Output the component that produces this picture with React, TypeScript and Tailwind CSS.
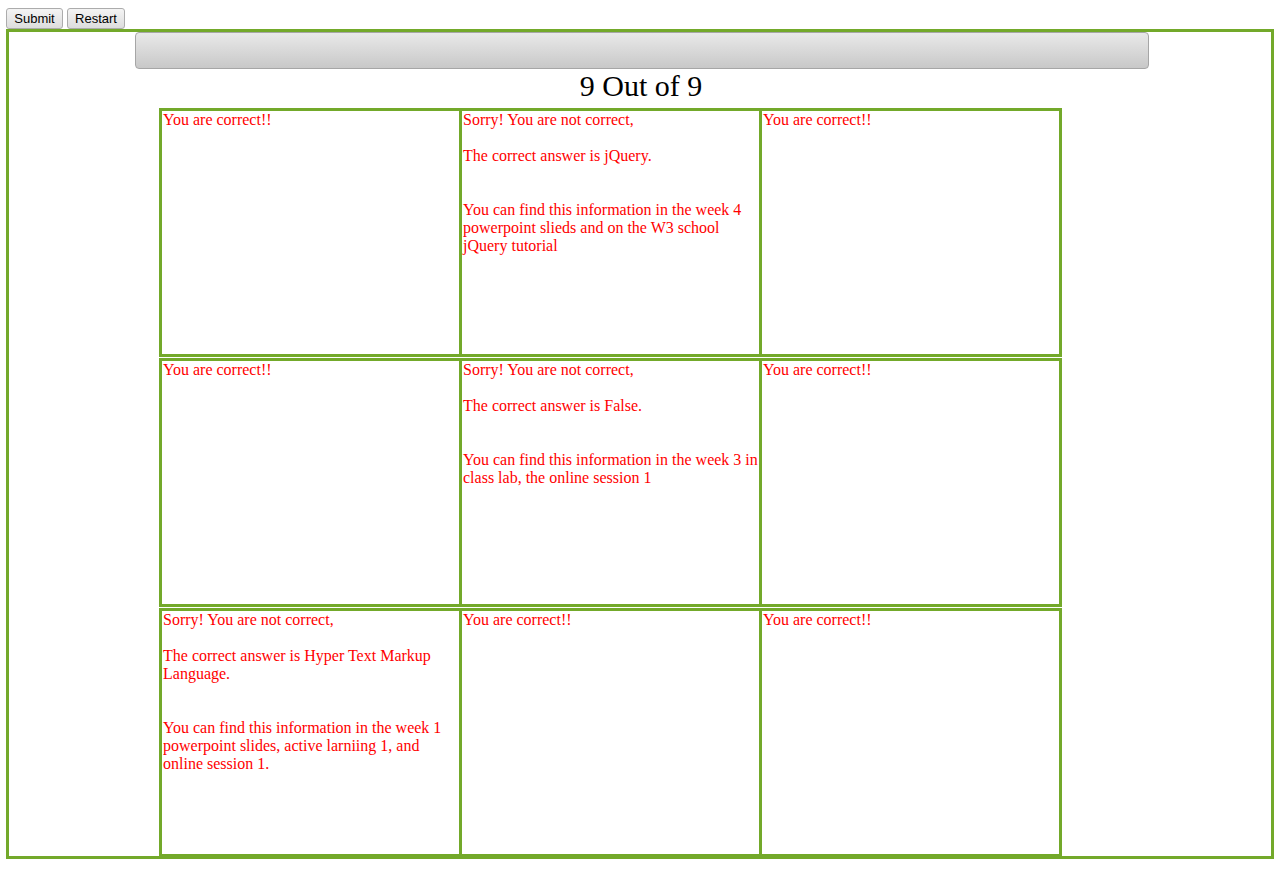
import React from "react";

const G = "border-[#73a92a]";

type CellProps = { children: React.ReactNode; first?: boolean };

function Cell({ children, first }: CellProps) {
  return (
    <div
      className={
        first
          ? "w-[297px] h-full pl-[1px] text-[16px] leading-[18px] text-[#ff0000]"
          : "w-[300px] h-full pl-[1px] border-l-[3px] border-[#73a92a] text-[16px] leading-[18px] text-[#ff0000]"
      }
    >
      {children}
    </div>
  );
}

const Correct = () => <p>You are correct!!</p>;

function Wrong({ answer, info }: { answer: string; info: string }) {
  return (
    <div>
      <p>Sorry! You are not correct,</p>
      <p className="mt-[18px]">The correct answer is {answer}</p>
      <p className="mt-[36px]">{info}</p>
    </div>
  );
}

export default function App() {
  return (
    <div className="bg-white min-h-[875px] pt-[8px] font-['Liberation_Serif',serif]">
      <div className="flex gap-[4px] pl-[6px]">
        <button className="h-[21px] w-[57px] rounded-[3px] border border-[#acacac] bg-gradient-to-b from-[#f4f4f4] to-[#dddddd] text-[13px] leading-[19px] text-black font-['Liberation_Sans',Arial,sans-serif]">
          Submit
        </button>
        <button className="h-[21px] w-[58px] rounded-[3px] border border-[#acacac] bg-gradient-to-b from-[#f4f4f4] to-[#dddddd] text-[13px] leading-[19px] text-black font-['Liberation_Sans',Arial,sans-serif]">
          Restart
        </button>
      </div>
      <div className={`ml-[6px] w-[1268px] border-[3px] ${G}`}>
        <div className="ml-[126px] w-[1014px] h-[37px] rounded-[4px] border border-[#a6a6a6] bg-gradient-to-b from-[#e9e9e9] to-[#c8c8c8]" />
        <div className="h-[39px] text-center text-[30px] leading-[33px] text-black pl-[2px]">
          9 Out of 9
        </div>
        <div className="ml-[150px] flex flex-col gap-[1px]">
          <div className={`flex w-[903px] h-[249px] border-[3px] ${G}`}>
            <Cell first>
              <Correct />
            </Cell>
            <Cell>
              <Wrong
                answer="jQuery."
                info="You can find this information in the week 4 powerpoint slieds and on the W3 school jQuery tutorial"
              />
            </Cell>
            <Cell>
              <Correct />
            </Cell>
          </div>
          <div className={`flex w-[903px] h-[249px] border-[3px] ${G}`}>
            <Cell first>
              <Correct />
            </Cell>
            <Cell>
              <Wrong
                answer="False."
                info="You can find this information in the week 3 in class lab, the online session 1"
              />
            </Cell>
            <Cell>
              <Correct />
            </Cell>
          </div>
          <div className={`flex w-[903px] h-[249px] border-[3px] ${G} -mb-[1px]`}>
            <Cell first>
              <Wrong
                answer="Hyper Text Markup Language."
                info="You can find this information in the week 1 powerpoint slides, active larniing 1, and online session 1."
              />
            </Cell>
            <Cell>
              <Correct />
            </Cell>
            <Cell>
              <Correct />
            </Cell>
          </div>
        </div>
      </div>
    </div>
  );
}
